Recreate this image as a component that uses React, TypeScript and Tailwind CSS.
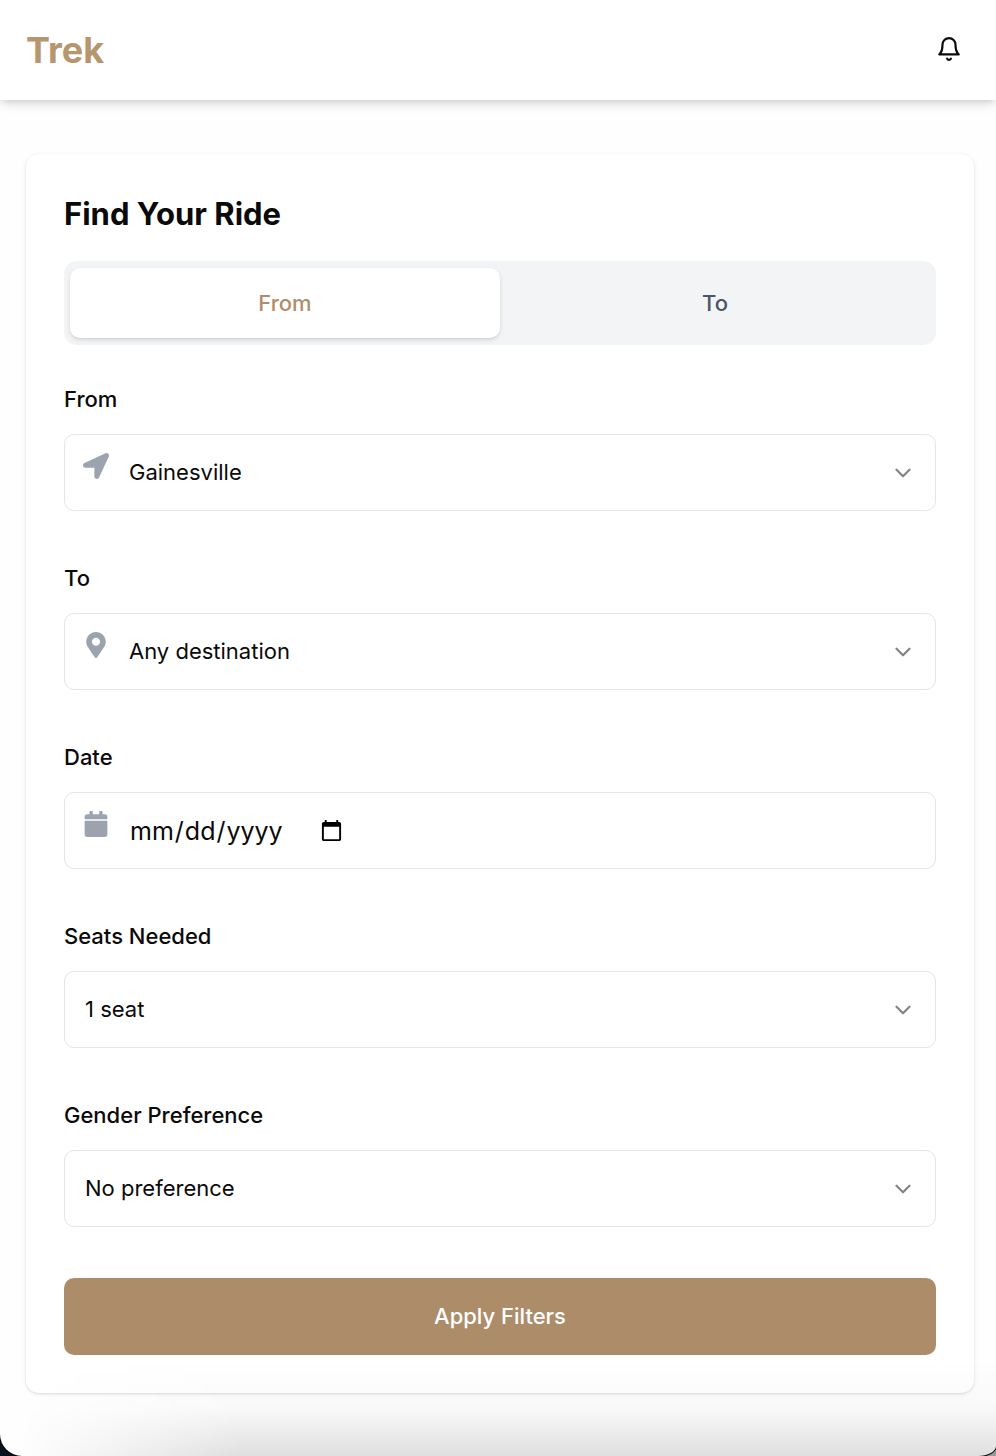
import { useState, type ReactNode } from "react";
import { ChevronDown } from "lucide-react";
import { FaCalendar, FaLocationArrow, FaMapMarkerAlt } from "react-icons/fa";
import { FiBell } from "react-icons/fi";

function Field({ id, label, icon, children }: { id: string; label: string; icon?: ReactNode; children: ReactNode }) {
  return (
    <div className="flex flex-col gap-[19px]">
      <label htmlFor={id} className="text-[22px] leading-8 font-medium">
        {label}
      </label>
      <div className="relative">
        {icon && (
          <span className="pointer-events-none absolute top-[19px] left-[19px] flex w-[26px] justify-center text-[#9ca3af]">
            {icon}
          </span>
        )}
        {children}
      </div>
    </div>
  );
}

function SelectField({ id, label, icon, options }: { id: string; label: string; icon?: ReactNode; options: string[] }) {
  return (
    <Field id={id} label={label} icon={icon}>
      <select
        id={id}
        className={
          "h-[77px] w-full appearance-none rounded-[10px] border border-[#e5e5e5] bg-transparent pr-14 text-[22px] " +
          (icon ? "pl-16" : "pl-5")
        }
      >
        {options.map((option) => (
          <option key={option}>{option}</option>
        ))}
      </select>
      <ChevronDown className="pointer-events-none absolute inset-y-0 right-5 my-auto size-[26px] opacity-50" />
    </Field>
  );
}

const TABS = ["From", "To"];

export default function App() {
  const [tab, setTab] = useState("From");

  return (
    <div className="min-h-screen bg-linear-to-r from-[#08121e] from-50% to-[#999999] to-50% font-['Inter',sans-serif] text-[#0a0a0a]">
      <div className="relative flex min-h-screen flex-col overflow-hidden rounded-br-[18px_10px] rounded-bl-[22px] bg-[#fefefe] shadow-[0_0_0_1px_#000]">
        <header className="flex h-[100px] items-center justify-between bg-white pr-[34px] pl-[26px] shadow-[0_6px_10px_-1px_rgba(0,0,0,0.1),0_3px_6px_-2px_rgba(0,0,0,0.12)]">
          <a href="#" className="text-[36px] leading-[52px] font-bold text-[#b5966e]">
            Trek
          </a>
          <button type="button" aria-label="Notifications" className="pb-[2px]">
            <FiBell className="size-[26px]" />
          </button>
        </header>

        <main className="pt-[54px] pr-[22px] pb-[62px] pl-[26px] max-sm:px-4">
          <section className="rounded-[13px] bg-white p-[38px] shadow-[0_1px_5px_rgba(0,0,0,0.08),0_1px_3px_-1px_rgba(0,0,0,0.16)] max-sm:p-6">
            <h1 className="mb-[25px] text-[31px] leading-[44px] font-bold">Find Your Ride</h1>

            <div className="mb-[38px] flex rounded-[13px] bg-[#f3f4f6] px-[6px] py-[7px]">
              {TABS.map((name) => (
                <button
                  key={name}
                  type="button"
                  aria-pressed={tab === name}
                  onClick={() => setTab(name)}
                  className={
                    "h-[70px] flex-1 rounded-[10px] text-[22px] font-medium " +
                    (tab === name
                      ? "bg-white text-[#b08d6a] shadow-[0_2px_5px_rgba(0,0,0,0.1),0_1px_3px_-1px_rgba(0,0,0,0.12)]"
                      : "text-[#4b5563]")
                  }
                >
                  {name}
                </button>
              ))}
            </div>

            <form className="flex flex-col gap-[51px]" onSubmit={(event) => event.preventDefault()}>
              <SelectField
                id="from"
                label="From"
                icon={<FaLocationArrow className="size-[26px]" />}
                options={["Gainesville"]}
              />
              <SelectField
                id="to"
                label="To"
                icon={<FaMapMarkerAlt className="size-[26px]" />}
                options={["Any destination", "Gainesville"]}
              />
              <Field id="date" label="Date" icon={<FaCalendar className="size-[26px]" />}>
                <div className="flex h-[77px] items-center rounded-[10px] border border-[#e5e5e5] pt-[2px] pl-16">
                  <input id="date" type="date" className="bg-transparent text-[25px] outline-none" />
                </div>
              </Field>
              <SelectField id="seats" label="Seats Needed" options={["1 seat", "2 seats", "3 seats", "4 seats"]} />
              <SelectField id="gender" label="Gender Preference" options={["No preference", "Female", "Male"]} />
              <button type="submit" className="h-[77px] rounded-[10px] bg-[#ad8c6a] text-[22px] font-medium text-white">
                Apply Filters
              </button>
            </form>
          </section>
        </main>

        <div className="pointer-events-none absolute inset-x-0 bottom-0 h-24 bg-linear-to-b from-transparent via-black/2 to-black/12 [mask-image:linear-gradient(to_right,transparent_2%,black_24%)]" />
      </div>
    </div>
  );
}
